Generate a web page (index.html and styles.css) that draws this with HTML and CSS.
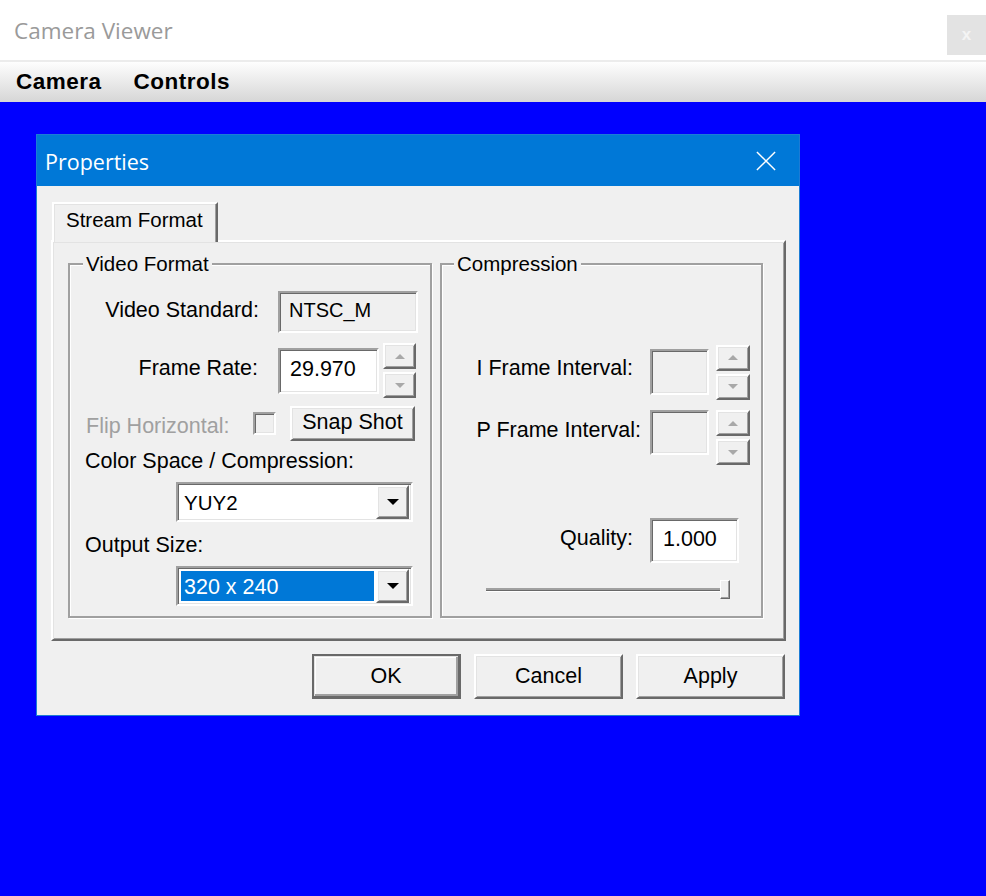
FILE: index.html
```html
<!DOCTYPE html>
<html>
<head>
<meta charset="utf-8">
<title>Camera Viewer</title>
<link rel="stylesheet" href="styles.css">
</head>
<body>
<div class="app">
  <header class="app-header">
    <span class="app-title">Camera Viewer</span>
    <span class="app-close">x</span>
  </header>
  <div class="app-divider"></div>
  <nav class="menubar">
    <span class="menu-item">Camera</span>
    <span class="menu-item">Controls</span>
  </nav>
  <main class="desktop">
    <section class="dialog">
      <div class="dlg-title">
        <span class="dlg-title-text">Properties</span>
        <svg class="dlg-close" width="22" height="22" viewBox="0 0 22 22"><path d="M1 1 L21 21 M21 1 L1 21" stroke="#fff" stroke-width="1.6" fill="none"/></svg>
      </div>
      <div class="dlg-body">
        <div class="tabs"><div class="tab">Stream Format</div></div>
        <div class="panel">
          <div class="group group-video">
            <span class="group-label">Video Format</span>
            <div class="row row-std">
              <span class="lbl lbl-std">Video Standard:</span>
              <div class="field sunken field-std readonly">NTSC_M</div>
            </div>
            <div class="row row-rate">
              <span class="lbl lbl-rate">Frame Rate:</span>
              <div class="field sunken field-rate">29.970</div>
              <div class="spin">
                <div class="spin-btn raised"><span class="tri-up"></span></div>
                <div class="spin-btn raised"><span class="tri-down"></span></div>
              </div>
            </div>
            <div class="row row-flip">
              <span class="lbl lbl-flip">Flip Horizontal:</span>
              <span class="checkbox sunken"></span>
              <div class="btn raised btn-snap">Snap Shot</div>
            </div>
            <div class="row row-text">Color Space / Compression:</div>
            <div class="row row-combo">
              <div class="combo sunken">
                <span class="combo-val">YUY2</span>
                <span class="combo-btn raised"><span class="tri-black"></span></span>
              </div>
            </div>
            <div class="row row-text row-text2">Output Size:</div>
            <div class="row row-combo">
              <div class="combo sunken">
                <span class="combo-val selected">320 x 240</span>
                <span class="combo-btn raised"><span class="tri-black"></span></span>
              </div>
            </div>
          </div>
          <div class="group group-comp">
            <span class="group-label">Compression</span>
            <div class="row row-ifr">
              <span class="lbl lbl-ifr">I Frame Interval:</span>
              <div class="field sunken field-int readonly"></div>
              <div class="spin spin-c">
                <div class="spin-btn raised"><span class="tri-up"></span></div>
                <div class="spin-btn raised"><span class="tri-down"></span></div>
              </div>
            </div>
            <div class="row row-pfr">
              <span class="lbl lbl-pfr">P Frame Interval:</span>
              <div class="field sunken field-int readonly"></div>
              <div class="spin spin-c">
                <div class="spin-btn raised"><span class="tri-up"></span></div>
                <div class="spin-btn raised"><span class="tri-down"></span></div>
              </div>
            </div>
            <div class="row row-q">
              <span class="lbl lbl-q">Quality:</span>
              <div class="field sunken field-q">1.000</div>
            </div>
            <div class="slider">
              <div class="track"></div>
              <div class="thumb"></div>
            </div>
          </div>
        </div>
        <div class="buttons">
          <div class="btn raised btn-dlg btn-default">OK</div>
          <div class="btn raised btn-dlg">Cancel</div>
          <div class="btn raised btn-dlg">Apply</div>
        </div>
      </div>
    </section>
  </main>
</div>
</body>
</html>
```

FILE: styles.css
```css
* { box-sizing: border-box; }
html, body { margin: 0; padding: 0; }
body {
  width: 986px;
  height: 896px;
  overflow: hidden;
  font-family: "Liberation Sans", Arial, sans-serif;
  font-size: 21.5px;
  color: #000;
}
.app { display: flex; flex-direction: column; height: 896px; }

.app-header {
  height: 60px;
  background: #fff;
  display: flex;
  align-items: flex-start;
  justify-content: space-between;
}
.app-title {
  font-family: "Open Sans", "Noto Sans", sans-serif;
  font-size: 22.5px;
  color: #9a9a9a;
  margin: 16px 0 0 14px;
  line-height: 30px;
}
.app-close {
  width: 39px;
  height: 40px;
  margin-top: 15px;
  background: #e3e3e3;
  color: #f4f4f4;
  font-family: "Liberation Sans", Arial, sans-serif;
  font-weight: bold;
  font-size: 17px;
  display: flex;
  align-items: center;
  justify-content: center;
  line-height: 1;
  padding-bottom: 1px;
}
.app-divider { height: 2px; background: #ececec; }
.menubar {
  height: 40px;
  background: linear-gradient(#fefefe, #d6d6d6);
  display: flex;
  align-items: center;
  padding-left: 16px;
  gap: 32px;
}
.menu-item {
  font-weight: bold;
  font-size: 22.5px;
  color: #000;
  letter-spacing: 0.5px;
}

.desktop {
  flex: 1;
  background: #0000ff;
  padding: 32px 0 0 36px;
}
.dialog {
  width: 764px;
  height: 582px;
  border: 1px solid #1c7cd5;
  background: #f0f0f0;
  display: flex;
  flex-direction: column;
}
.dlg-title {
  height: 51px;
  background: #0078d7;
  display: flex;
  align-items: center;
  justify-content: space-between;
  padding: 0 23px 0 8px;
}
.dlg-title-text {
  font-family: "Open Sans", "Noto Sans", sans-serif;
  font-size: 21.5px;
  color: #fff;
  margin-top: 1px;
}
.dlg-close { display: block; width: 20px; height: 20px; }

.dlg-body {
  flex: 1;
  padding: 16px 13px 0 14px;
  display: flex;
  flex-direction: column;
}
.tabs { display: flex; height: 38px; position: relative; z-index: 1; }
.tab {
  margin-left: 1px;
  width: 166px;
  height: 40px;
  background: #f0f0f0;
  border-top: 2px solid #fff;
  border-left: 2px solid #fff;
  border-right: 2px solid #696969;
  box-shadow: inset -1px 0 0 #a0a0a0, inset 0 1px 0 #e3e3e3, inset 1px 0 0 #e3e3e3;
  padding: 1px 0 0 12px;
  line-height: 30px;
  font-size: 20.5px;
}
.panel {
  height: 401px;
  border: 2px solid;
  border-color: #fff #696969 #696969 #fff;
  box-shadow: inset 1px 1px 0 #e3e3e3, inset -1px -1px 0 #a0a0a0;
  display: flex;
  padding: 21px 0 0 15px;
  gap: 8px;
}

.group {
  position: relative;
  height: 355px;
  border: 2px solid #a0a0a0;
  box-shadow: inset 1px 1px 0 #fff, 1px 1px 0 #fff;
  display: flex;
  flex-direction: column;
}
.group-video { width: 364px; }
.group-comp { width: 323px; }
.group-label {
  position: absolute;
  top: -13px;
  left: 13px;
  background: #f0f0f0;
  padding: 0 3px;
  line-height: 24px;
  font-size: 20.5px;
}
.group-comp .group-label { left: 12px; }

.row { display: flex; align-items: center; }
.lbl { text-align: right; white-space: nowrap; }

.sunken {
  border: 2px solid;
  border-color: #a0a0a0 #fff #fff #a0a0a0;
  box-shadow: inset 1px 1px 0 #696969, inset -1px -1px 0 #e3e3e3;
}
.raised {
  border: 2px solid;
  border-color: #fff #696969 #696969 #fff;
  box-shadow: inset 1px 1px 0 #e3e3e3, inset -1px -1px 0 #a0a0a0;
  background: #f0f0f0;
}
.field {
  background: #fff;
  display: flex;
  align-items: center;
  padding-left: 9px;
}
.field.readonly { background: #f0f0f0; }

/* video group rows */
.row-std { margin-top: 26px; height: 42px; }
.lbl-std { width: 189px; margin-top: -4px; }
.field-std { margin-left: 19px; width: 140px; height: 42px; padding-left: 9px; padding-bottom: 4px; font-size: 20px; }
.row-rate { margin-top: 10px; height: 55px; }
.lbl-rate { width: 188px; margin-top: -5px; }
.field-rate { margin-left: 20px; width: 101px; height: 46px; padding-left: 10px; font-size: 21.5px; padding-bottom: 2px; }
.spin { display: flex; flex-direction: column; gap: 3px; margin-left: 4px; }
.spin-btn {
  width: 33px;
  height: 26px;
  display: flex;
  align-items: center;
  justify-content: center;
}
.tri-up, .tri-down {
  width: 0; height: 0;
  border-left: 5px solid transparent;
  border-right: 5px solid transparent;
}
.tri-up { border-bottom: 5px solid #a8a8a8; }
.tri-down { border-top: 5px solid #a8a8a8; }

.row-flip { margin-top: 8px; height: 35px; padding-left: 16px; }
.lbl-flip { width: 167px; text-align: left; color: #a0a0a0; margin-top: 5px; }
.checkbox { width: 23px; height: 23px; background: #f0f0f0; display: block; }
.btn {
  display: flex;
  align-items: center;
  justify-content: center;
}
.btn-snap { margin-left: 14px; width: 125px; height: 35px; padding-bottom: 2px; }

.row-text { margin-top: 8px; height: 24px; padding-left: 15px; }
.row-text2 { margin-top: 11px; }
.row-combo { margin-top: 9px; height: 40px; padding-left: 106px; }
.combo {
  width: 237px;
  height: 40px;
  background: #fff;
  display: flex;
  align-items: center;
  justify-content: space-between;
  padding: 3px 2px 3px 3px;
}
.combo-val {
  flex: 1;
  height: 100%;
  display: flex;
  align-items: center;
  padding-left: 3px;
  margin-right: 2px;
  font-size: 20.5px;
  padding-top: 2px;
}
.combo-val.selected { background: #0078d7; color: #fff; font-size: 21.5px; }
.combo-btn {
  width: 33px;
  height: 34px;
  display: flex;
  align-items: center;
  justify-content: center;
}
.tri-black {
  width: 0; height: 0;
  border-left: 6px solid transparent;
  border-right: 6px solid transparent;
  border-top: 6px solid #000;
}

/* compression rows */
.row-ifr { margin-top: 79px; height: 56px; }
.lbl-ifr { width: 191px; margin-top: -8px; }
.field-int { margin-left: 17px; width: 59px; height: 46px; }
.spin-c { margin-left: 7px; }
.spin-c .spin-btn { width: 34px; }
.row-pfr { margin-top: 10px; height: 56px; align-items: flex-start; }
.lbl-pfr { width: 199px; line-height: 45px; margin-top: -2px; }
.row-pfr .field-int { margin-left: 9px; height: 45px; }
.row-q { margin-top: 52px; height: 45px; }
.lbl-q { width: 191px; margin-top: -4px; }
.field-q { margin-left: 17px; width: 89px; height: 45px; padding-left: 11px; padding-bottom: 3px; }

.slider {
  position: relative;
  margin: 17px 0 0 44px;
  width: 244px;
  height: 19px;
}
.track {
  position: absolute;
  left: 0; right: 0;
  top: 8px;
  height: 4px;
  border-top: 2px solid #a0a0a0;
  box-shadow: inset 0 1px 0 #696969;
  border-bottom: 1px solid #fff;
  background: #e3e3e3;
}
.thumb {
  position: absolute;
  right: 0;
  top: 0;
  width: 10px;
  height: 19px;
  border: 1px solid;
  border-color: #fff #696969 #696969 #fff;
  box-shadow: inset -1px -1px 0 #a0a0a0;
  background: #f0f0f0;
}

.buttons {
  display: flex;
  justify-content: flex-end;
  gap: 13px;
  margin-top: 13px;
  padding-right: 1px;
}
.btn-dlg { width: 149px; height: 45px; }
.btn-default {
  border: 2px solid #696969;
  border-bottom-width: 3px;
  border-right-width: 3px;
  box-shadow: inset 1px 1px 0 #e3e3e3, inset -2px -2px 0 #a0a0a0, inset 2px 2px 0 #fff;
}
```
